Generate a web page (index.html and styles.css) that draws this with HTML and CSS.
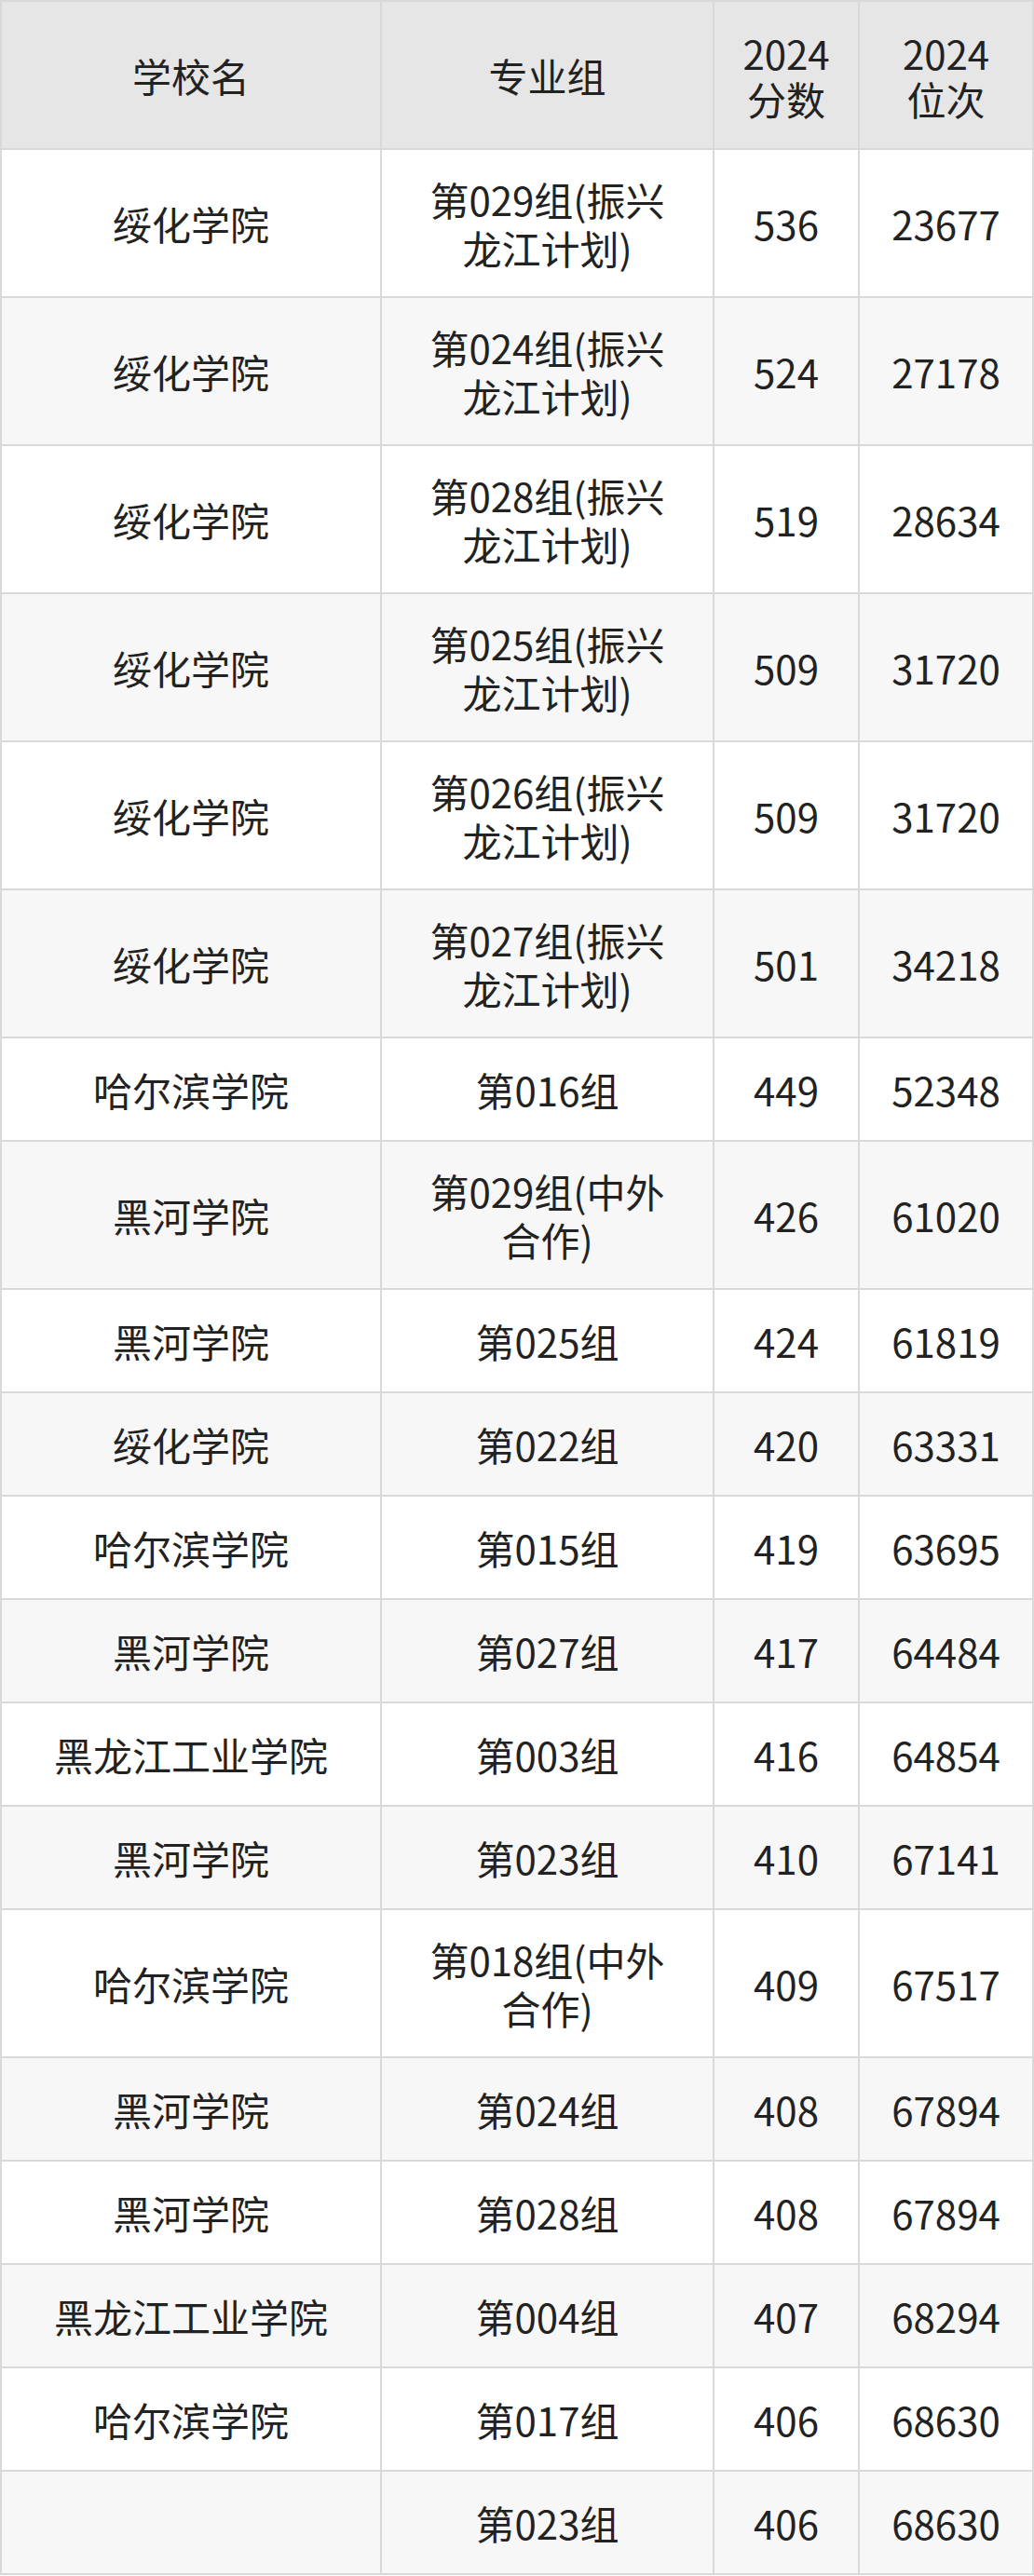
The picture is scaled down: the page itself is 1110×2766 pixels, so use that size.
FILE: index.html
```html
<!DOCTYPE html>
<html lang="zh-CN">
<head>
<meta charset="utf-8">
<title>2024 分数位次</title>
<link rel="stylesheet" href="styles.css">
</head>
<body>
<div class="table">
  <div class="row head">
    <div class="cell">学校名</div>
    <div class="cell">专业组</div>
    <div class="cell">2024<br>分数</div>
    <div class="cell">2024<br>位次</div>
  </div>
  <div class="row tall odd"><div class="cell">绥化学院</div><div class="cell">第029组(振兴<br>龙江计划)</div><div class="cell">536</div><div class="cell">23677</div></div>
  <div class="row tall even"><div class="cell">绥化学院</div><div class="cell">第024组(振兴<br>龙江计划)</div><div class="cell">524</div><div class="cell">27178</div></div>
  <div class="row tall odd"><div class="cell">绥化学院</div><div class="cell">第028组(振兴<br>龙江计划)</div><div class="cell">519</div><div class="cell">28634</div></div>
  <div class="row tall even"><div class="cell">绥化学院</div><div class="cell">第025组(振兴<br>龙江计划)</div><div class="cell">509</div><div class="cell">31720</div></div>
  <div class="row tall odd"><div class="cell">绥化学院</div><div class="cell">第026组(振兴<br>龙江计划)</div><div class="cell">509</div><div class="cell">31720</div></div>
  <div class="row tall even"><div class="cell">绥化学院</div><div class="cell">第027组(振兴<br>龙江计划)</div><div class="cell">501</div><div class="cell">34218</div></div>
  <div class="row short odd"><div class="cell">哈尔滨学院</div><div class="cell">第016组</div><div class="cell">449</div><div class="cell">52348</div></div>
  <div class="row tall even"><div class="cell">黑河学院</div><div class="cell">第029组(中外<br>合作)</div><div class="cell">426</div><div class="cell">61020</div></div>
  <div class="row short odd"><div class="cell">黑河学院</div><div class="cell">第025组</div><div class="cell">424</div><div class="cell">61819</div></div>
  <div class="row short even"><div class="cell">绥化学院</div><div class="cell">第022组</div><div class="cell">420</div><div class="cell">63331</div></div>
  <div class="row short odd"><div class="cell">哈尔滨学院</div><div class="cell">第015组</div><div class="cell">419</div><div class="cell">63695</div></div>
  <div class="row short even"><div class="cell">黑河学院</div><div class="cell">第027组</div><div class="cell">417</div><div class="cell">64484</div></div>
  <div class="row short odd"><div class="cell">黑龙江工业学院</div><div class="cell">第003组</div><div class="cell">416</div><div class="cell">64854</div></div>
  <div class="row short even"><div class="cell">黑河学院</div><div class="cell">第023组</div><div class="cell">410</div><div class="cell">67141</div></div>
  <div class="row tall odd"><div class="cell">哈尔滨学院</div><div class="cell">第018组(中外<br>合作)</div><div class="cell">409</div><div class="cell">67517</div></div>
  <div class="row short even"><div class="cell">黑河学院</div><div class="cell">第024组</div><div class="cell">408</div><div class="cell">67894</div></div>
  <div class="row short odd"><div class="cell">黑河学院</div><div class="cell">第028组</div><div class="cell">408</div><div class="cell">67894</div></div>
  <div class="row short even"><div class="cell">黑龙江工业学院</div><div class="cell">第004组</div><div class="cell">407</div><div class="cell">68294</div></div>
  <div class="row short odd"><div class="cell">哈尔滨学院</div><div class="cell">第017组</div><div class="cell">406</div><div class="cell">68630</div></div>
  <div class="row short even"><div class="cell"></div><div class="cell">第023组</div><div class="cell">406</div><div class="cell">68630</div></div>
</div>
</body>
</html>
```

FILE: styles.css
```css
html, body {
  margin: 0;
  padding: 0;
  background: #ffffff;
}

.table {
  width: 1110px;
  box-sizing: border-box;
  padding: 2px;
  background: #d9d9d9;
  display: flex;
  flex-direction: column;
  gap: 2px;
  font-family: "Noto Sans CJK SC", "Noto Sans", sans-serif;
  font-size: 42px;
  line-height: 52px;
  color: #222222;
}

.row {
  display: grid;
  grid-template-columns: 406px 355px 154px 185px;
  gap: 2px;
}

.cell {
  display: flex;
  align-items: center;
  justify-content: center;
  text-align: center;
}

.head {
  height: 157px;
}

.head .cell {
  background: #e6e6e6;
  line-height: 49px;
}

.tall {
  height: 157px;
}

.short {
  height: 109px;
}

.odd .cell {
  background: #ffffff;
}

.even .cell {
  background: #f7f7f7;
}
```
